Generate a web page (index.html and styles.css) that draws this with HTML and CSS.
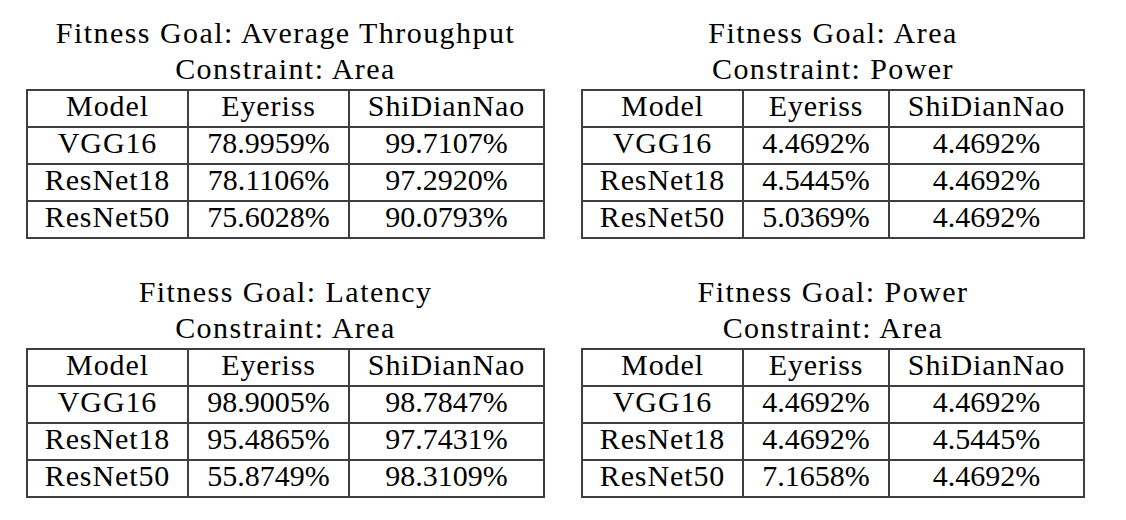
FILE: index.html
```html
<!DOCTYPE html>
<html>
<head>
<meta charset="utf-8">
<link rel="stylesheet" href="styles.css">
</head>
<body>
<div class="grid">
  <section class="block wide">
    <div class="caption">Fitness Goal: Average Throughput<br>Constraint: Area</div>
    <table class="res">
      <colgroup><col class="c1"><col class="c2w"><col class="c3"></colgroup>
      <tr><td>Model</td><td>Eyeriss</td><td>ShiDianNao</td></tr>
      <tr><td>VGG16</td><td>78.9959%</td><td>99.7107%</td></tr>
      <tr><td>ResNet18</td><td>78.1106%</td><td>97.2920%</td></tr>
      <tr><td>ResNet50</td><td>75.6028%</td><td>90.0793%</td></tr>
    </table>
  </section>
  <section class="block narrow">
    <div class="caption">Fitness Goal: Area<br>Constraint: Power</div>
    <table class="res">
      <colgroup><col class="c1"><col class="c2n"><col class="c3"></colgroup>
      <tr><td>Model</td><td>Eyeriss</td><td>ShiDianNao</td></tr>
      <tr><td>VGG16</td><td>4.4692%</td><td>4.4692%</td></tr>
      <tr><td>ResNet18</td><td>4.5445%</td><td>4.4692%</td></tr>
      <tr><td>ResNet50</td><td>5.0369%</td><td>4.4692%</td></tr>
    </table>
  </section>
  <section class="block wide">
    <div class="caption">Fitness Goal: Latency<br>Constraint: Area</div>
    <table class="res">
      <colgroup><col class="c1"><col class="c2w"><col class="c3"></colgroup>
      <tr><td>Model</td><td>Eyeriss</td><td>ShiDianNao</td></tr>
      <tr><td>VGG16</td><td>98.9005%</td><td>98.7847%</td></tr>
      <tr><td>ResNet18</td><td>95.4865%</td><td>97.7431%</td></tr>
      <tr><td>ResNet50</td><td>55.8749%</td><td>98.3109%</td></tr>
    </table>
  </section>
  <section class="block narrow">
    <div class="caption">Fitness Goal: Power<br>Constraint: Area</div>
    <table class="res">
      <colgroup><col class="c1"><col class="c2n"><col class="c3"></colgroup>
      <tr><td>Model</td><td>Eyeriss</td><td>ShiDianNao</td></tr>
      <tr><td>VGG16</td><td>4.4692%</td><td>4.4692%</td></tr>
      <tr><td>ResNet18</td><td>4.4692%</td><td>4.5445%</td></tr>
      <tr><td>ResNet50</td><td>7.1658%</td><td>4.4692%</td></tr>
    </table>
  </section>
</div>
</body>
</html>
```
FILE: styles.css
```css
html, body {
  margin: 0;
  padding: 0;
  background: #ffffff;
}
body {
  font-family: "Liberation Serif", "Times New Roman", serif;
  font-size: 30px;
  color: #000;
}
.grid {
  display: grid;
  grid-template-columns: 519px 504px;
  column-gap: 36px;
  row-gap: 35px;
  padding: 15px 0 0 26px;
}
.caption {
  text-align: center;
  line-height: 36px;
  margin-bottom: 2px;
  letter-spacing: 1.45px;
}
.res {
  border-collapse: collapse;
  table-layout: fixed;
  width: 100%;
}
.res td {
  border: 2px solid #3f3f3f;
  height: 30px;
  padding: 0 0 5px 0;
  text-align: center;
  line-height: 30px;
  white-space: nowrap;
}
.res tr:first-child td,
.res td:first-child {
  letter-spacing: 0.9px;
}
.c1 { width: 161px; }
.c2w { width: 161px; }
.c2n { width: 146px; }
.c3 { width: auto; }
```
